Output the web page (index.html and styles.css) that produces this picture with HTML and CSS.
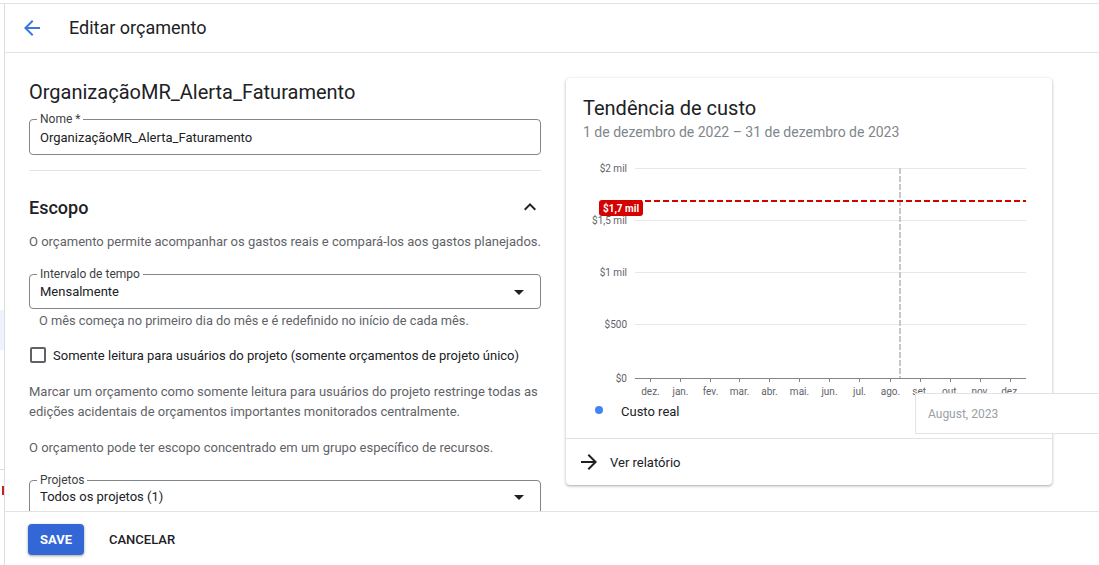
FILE: index.html
```html
<!DOCTYPE html>
<html lang="pt-BR">
<head>
<meta charset="utf-8">
<title>Editar orçamento</title>
<link rel="stylesheet" href="styles.css">
</head>
<body>
<div class="shell">
  <div class="rail">
    <div class="rail-hl"></div>
    <div class="rail-line"></div>
    <div class="rail-mark"></div>
  </div>
  <div class="main">
    <header class="topbar">
      <svg class="back" viewBox="0 0 24 24" width="24" height="24"><path d="M20 11H7.83l5.59-5.59L12 4l-8 8 8 8 1.41-1.41L7.83 13H20v-2z"/></svg>
      <h1 class="page-title">Editar orçamento</h1>
    </header>
    <div class="content">
      <section class="form">
        <h2 class="budget-name">OrganizaçãoMR_Alerta_Faturamento</h2>
        <div class="field field-name">
          <span class="field-label">Nome *</span>
          <span class="field-value">OrganizaçãoMR_Alerta_Faturamento</span>
        </div>
        <div class="divider"></div>
        <div class="section-head">
          <h3 class="section-title">Escopo</h3>
          <svg class="chev" viewBox="0 0 24 24" width="24" height="24"><path d="M12 8l-6 6 1.41 1.41L12 10.83l4.59 4.58L18 14z"/></svg>
        </div>
        <p class="desc">O orçamento permite acompanhar os gastos reais e compará-los aos gastos planejados.</p>
        <div class="field field-select field-interval">
          <span class="field-label">Intervalo de tempo</span>
          <span class="field-value">Mensalmente</span>
          <svg class="drop" viewBox="0 0 24 24" width="24" height="24"><path d="M7 10l5 5 5-5z"/></svg>
        </div>
        <p class="hint">O mês começa no primeiro dia do mês e é redefinido no início de cada mês.</p>
        <label class="check-row">
          <span class="checkbox"></span>
          <span class="check-label">Somente leitura para usuários do projeto (somente orçamentos de projeto único)</span>
        </label>
        <p class="desc para">Marcar um orçamento como somente leitura para usuários do projeto restringe todas as edições acidentais de orçamentos importantes monitorados centralmente.</p>
        <p class="desc para2">O orçamento pode ter escopo concentrado em um grupo específico de recursos.</p>
        <div class="field field-select field-projects">
          <span class="field-label">Projetos</span>
          <span class="field-value">Todos os projetos (1)</span>
          <svg class="drop" viewBox="0 0 24 24" width="24" height="24"><path d="M7 10l5 5 5-5z"/></svg>
        </div>
      </section>
      <aside class="card">
        <div class="card-head">
          <h2 class="card-title">Tendência de custo</h2>
          <p class="card-sub">1 de dezembro de 2022 – 31 de dezembro de 2023</p>
        </div>
        <svg class="chart" viewBox="0 0 486 254" width="486" height="254">
          <g class="grid">
            <line x1="69" y1="22.5" x2="460" y2="22.5"/>
            <line x1="69" y1="74.5" x2="460" y2="74.5"/>
            <line x1="69" y1="126.5" x2="460" y2="126.5"/>
            <line x1="69" y1="178.5" x2="460" y2="178.5"/>
          </g>
          <g class="ylab">
            <text x="61" y="25.5">$2 mil</text>
            <text x="61" y="77.5">$1,5 mil</text>
            <text x="61" y="129.5">$1 mil</text>
            <text x="61" y="181.5">$500</text>
            <text x="61" y="235.5">$0</text>
          </g>
          <line class="vline" x1="334" y1="22" x2="334" y2="232"/>
          <line class="axis" x1="69" y1="232.5" x2="460" y2="232.5"/>
          <g class="ticks">
            <line x1="84.5" y1="232" x2="84.5" y2="236"/>
            <line x1="114.5" y1="232" x2="114.5" y2="236"/>
            <line x1="144.5" y1="232" x2="144.5" y2="236"/>
            <line x1="173.5" y1="232" x2="173.5" y2="236"/>
            <line x1="203.5" y1="232" x2="203.5" y2="236"/>
            <line x1="233.5" y1="232" x2="233.5" y2="236"/>
            <line x1="263.5" y1="232" x2="263.5" y2="236"/>
            <line x1="293.5" y1="232" x2="293.5" y2="236"/>
            <line x1="324.5" y1="232" x2="324.5" y2="236"/>
            <line x1="354.5" y1="232" x2="354.5" y2="236"/>
            <line x1="384.5" y1="232" x2="384.5" y2="236"/>
            <line x1="414.5" y1="232" x2="414.5" y2="236"/>
            <line x1="444.5" y1="232" x2="444.5" y2="236"/>
          </g>
          <g class="xlab">
            <text x="84.5" y="248.5">dez.</text>
            <text x="114.5" y="248.5">jan.</text>
            <text x="144.5" y="248.5">fev.</text>
            <text x="173.5" y="248.5">mar.</text>
            <text x="203.5" y="248.5">abr.</text>
            <text x="233.5" y="248.5">mai.</text>
            <text x="263.5" y="248.5">jun.</text>
            <text x="293.5" y="248.5">jul.</text>
            <text x="324.5" y="248.5">ago.</text>
            <text x="354.5" y="248.5">set.</text>
            <text x="384.5" y="248.5">out.</text>
            <text x="414.5" y="248.5">nov.</text>
            <text x="444.5" y="248.5">dez.</text>
          </g>
          <line class="budget" x1="70" y1="55" x2="460" y2="55"/>
          <rect class="badge" x="33" y="54" width="44" height="16" rx="3"/>
          <text class="badge-text" x="55" y="65.5">$1,7 mil</text>
        </svg>
        <div class="legend">
          <span class="dot"></span>
          <span class="legend-text">Custo real</span>
        </div>
        <div class="card-foot">
          <svg class="fwd" viewBox="0 0 24 24" width="24" height="24"><path d="M12 4l-1.41 1.41L16.17 11H4v2h12.17l-5.58 5.59L12 20l8-8z"/></svg>
          <span class="foot-text">Ver relatório</span>
        </div>
        <div class="tooltip">August, 2023</div>
      </aside>
    </div>
    <footer class="actions">
      <button class="btn-save">SAVE</button>
      <button class="btn-cancel">CANCELAR</button>
    </footer>
  </div>
</div>
</body>
</html>
```
FILE: styles.css
```css
* { box-sizing: border-box; }
html, body {
  margin: 0;
  padding: 0;
  overflow: hidden;
  background: #fff;
}
body {
  font-family: Roboto, "Liberation Sans", Arial, sans-serif;
  color: #202124;
  width: 1099px;
  height: 565px;
}
.shell {
  display: flex;
  height: 562px;
  margin-top: 3px;
  border-top: 1px solid #e3e3e3;
}
.rail {
  width: 4px;
  flex: none;
  display: flex;
  flex-direction: column;
  padding-top: 306px;
}
.rail-hl { height: 40px; background: #edf2fc; }
.rail-line { height: 1px; background: #dadce0; margin-top: 119px; }
.rail-mark { width: 2px; height: 9px; margin-left: 2px; margin-top: 16px; background: #c5221f; }
.main {
  flex: 1;
  min-width: 0;
  display: flex;
  flex-direction: column;
  border-left: 1px solid #dadce0;
}
.topbar {
  height: 49px;
  flex: none;
  display: flex;
  align-items: center;
  padding-left: 15px;
  padding-bottom: 1px;
  border-bottom: 1px solid #e3e3e3;
}
.back { fill: #3a78e0; flex: none; }
.page-title {
  margin: 0 0 0 25px;
  font-size: 18px;
  line-height: 24px;
  font-weight: 400;
  color: #202124;
}
.content {
  flex: 1;
  min-height: 0;
  overflow: hidden;
  display: flex;
  align-items: flex-start;
  gap: 25px;
  padding: 25px 0 0 24px;
}
.form {
  width: 512px;
  flex: none;
  display: flex;
  flex-direction: column;
}
.budget-name {
  margin: 0;
  font-size: 20px;
  line-height: 28px;
  font-weight: 400;
  color: #202124;
}
.field {
  position: relative;
  border: 1px solid #80868b;
  border-radius: 4px;
  display: flex;
  align-items: center;
  padding-left: 10px;
}
.field-label {
  position: absolute;
  top: -8px;
  left: 7px;
  padding: 0 3px;
  background: #fff;
  font-size: 12px;
  line-height: 14px;
  color: #3c4043;
}
.field-name { height: 36px; margin-top: 13px; }
.field-value { font-size: 13px; line-height: 16px; color: #202124; padding-top: 1px; }
.field-select { height: 35px; justify-content: space-between; padding-right: 9px; }
.drop { fill: #202124; }
.field-interval { margin-top: 22px; }
.field-projects { margin-top: 22px; height: 40px; align-items: flex-start; padding-top: 7px; }
.field-projects .drop { margin-top: -3px; }
.divider { height: 1px; background: #e3e3e3; margin-top: 15px; }
.section-head {
  margin-top: 24px;
  display: flex;
  align-items: center;
  justify-content: space-between;
  height: 24px;
}
.section-title { margin: 0; font-size: 18px; font-weight: 500; }
.chev { fill: #202124; margin-right: -1px; }
.desc {
  margin: 13px 0 0;
  font-size: 13px;
  line-height: 20px;
  color: #5f6368;
}
.hint {
  margin: 4px 0 0 10px;
  font-size: 12.8px;
  line-height: 16px;
  color: #5f6368;
}
.check-row {
  margin-top: 16px;
  display: flex;
  align-items: center;
  height: 20px;
}
.checkbox {
  width: 16px;
  height: 16px;
  border: 2px solid #5f6368;
  border-radius: 2px;
  margin-left: 1px;
  flex: none;
}
.check-label { margin-left: 7px; font-size: 13px; color: #202124; }
.para { margin-top: 17px; }
.para2 { margin-top: 16px; }
.card {
  position: relative;
  width: 486px;
  flex: none;
  height: 407px;
  border-radius: 4px;
  background: #fff;
  box-shadow: 0 1px 2px rgba(60,64,67,.3), 0 1px 3px 1px rgba(60,64,67,.12);
  display: flex;
  flex-direction: column;
}
.card-head { padding: 16px 17px 0; }
.card-title { margin: 0; font-size: 20px; line-height: 28px; font-weight: 400; }
.card-sub { margin: 0; font-size: 14px; line-height: 20px; color: #80868b; }
.chart { display: block; margin-top: 4px; flex: none; }
.grid line { stroke: #e8e8e8; stroke-width: 1; }
.ylab text { font-size: 10px; fill: #5f6368; text-anchor: end; font-family: Roboto, sans-serif; }
.xlab text { font-size: 10px; fill: #5f6368; text-anchor: middle; font-family: Roboto, sans-serif; }
.axis { stroke: #80868b; stroke-width: 1; }
.ticks line { stroke: #80868b; stroke-width: 1; }
.vline { stroke: #c8c8c8; stroke-width: 2; stroke-dasharray: 6 2; }
.budget { stroke: #d50000; stroke-width: 2; stroke-dasharray: 6 3; }
.badge { fill: #d50000; }
.badge-text { fill: #fff; font-size: 10px; font-weight: 700; text-anchor: middle; font-family: Roboto, sans-serif; }
.legend {
  height: 22px;
  display: flex;
  align-items: center;
  padding-left: 29px;
}
.dot { width: 8px; height: 8px; border-radius: 50%; background: #4285f4; margin-top: -2px; }
.legend-text { margin-left: 18px; font-size: 13px; color: #202124; }
.card-foot {
  margin-top: 16px;
  border-top: 1px solid #e3e3e3;
  flex: 1;
  display: flex;
  align-items: center;
  padding-left: 11px;
}
.fwd { fill: #202124; }
.foot-text { margin-left: 9px; font-size: 13px; color: #202124; }
.tooltip {
  position: absolute;
  left: 349px;
  top: 315px;
  width: 220px;
  height: 41px;
  border: 1px solid #e3e3e3;
  background: #fff;
  padding-left: 12px;
  display: flex;
  align-items: center;
  font-size: 12px;
  color: #9aa0a6;
}
.actions {
  flex: none;
  height: 54px;
  border-top: 1px solid #e3e3e3;
  display: flex;
  align-items: center;
  padding-left: 23px;
}
.btn-save {
  height: 31px;
  width: 56px;
  border: none;
  border-radius: 4px;
  background: #3367d6;
  color: #fff;
  font-family: Roboto, sans-serif;
  font-size: 13px;
  line-height: 31px;
  font-weight: 700;
  box-shadow: 0 1px 2px rgba(60,64,67,.3), 0 1px 3px 1px rgba(60,64,67,.15);
  padding: 0;
  margin-top: 2px;
}
.btn-cancel {
  margin-left: 17px;
  margin-top: 2px;
  border: none;
  background: none;
  font-family: Roboto, sans-serif;
  font-size: 13px;
  line-height: 16px;
  font-weight: 500;
  color: #202124;
  padding: 8px;
}
```
